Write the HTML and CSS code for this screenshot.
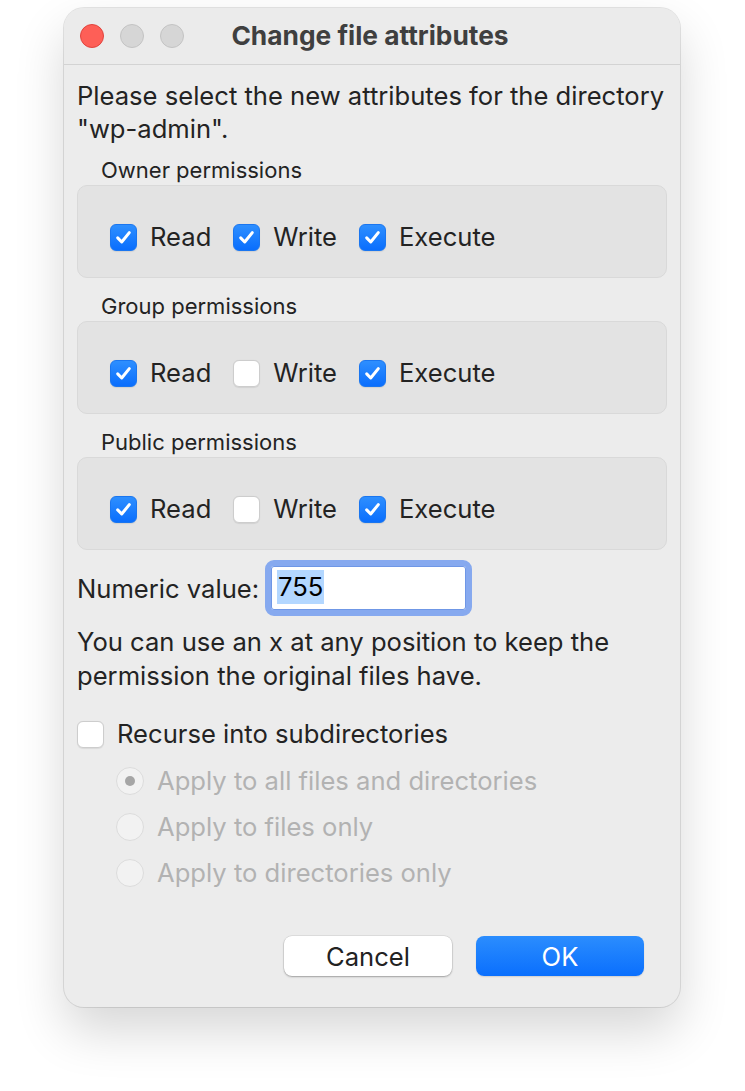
FILE: index.html
```html
<!DOCTYPE html>
<html>
<head>
<meta charset="utf-8">
<link rel="stylesheet" href="styles.css">
</head>
<body>
<div class="window">
  <div class="titlebar">
    <div class="lights">
      <span class="light red"></span>
      <span class="light"></span>
      <span class="light"></span>
    </div>
    <div class="title">Change file attributes</div>
  </div>
  <div class="content">
    <p class="intro">Please select the new attributes for the directory<br>"wp-admin".</p>

    <div class="group-label">Owner permissions</div>
    <div class="group">
      <div class="check"><span class="cb on"><svg viewBox="0 0 28 28"><path d="M7.5 14.5 L12 19 L20.5 8.5"/></svg></span>Read</div>
      <div class="check"><span class="cb on"><svg viewBox="0 0 28 28"><path d="M7.5 14.5 L12 19 L20.5 8.5"/></svg></span>Write</div>
      <div class="check"><span class="cb on"><svg viewBox="0 0 28 28"><path d="M7.5 14.5 L12 19 L20.5 8.5"/></svg></span>Execute</div>
    </div>

    <div class="group-label">Group permissions</div>
    <div class="group">
      <div class="check"><span class="cb on"><svg viewBox="0 0 28 28"><path d="M7.5 14.5 L12 19 L20.5 8.5"/></svg></span>Read</div>
      <div class="check"><span class="cb"></span>Write</div>
      <div class="check"><span class="cb on"><svg viewBox="0 0 28 28"><path d="M7.5 14.5 L12 19 L20.5 8.5"/></svg></span>Execute</div>
    </div>

    <div class="group-label">Public permissions</div>
    <div class="group">
      <div class="check"><span class="cb on"><svg viewBox="0 0 28 28"><path d="M7.5 14.5 L12 19 L20.5 8.5"/></svg></span>Read</div>
      <div class="check"><span class="cb"></span>Write</div>
      <div class="check"><span class="cb on"><svg viewBox="0 0 28 28"><path d="M7.5 14.5 L12 19 L20.5 8.5"/></svg></span>Execute</div>
    </div>

    <div class="numeric">
      <span class="numeric-label">Numeric value:</span>
      <div class="field"><span class="sel">755</span></div>
    </div>

    <p class="hint">You can use an x at any position to keep the<br>permission the original files have.</p>

    <div class="check recurse"><span class="cb"></span>Recurse into subdirectories</div>

    <div class="radios">
      <div class="radio"><span class="rb on"></span>Apply to all files and directories</div>
      <div class="radio"><span class="rb"></span>Apply to files only</div>
      <div class="radio"><span class="rb"></span>Apply to directories only</div>
    </div>

    <div class="buttons">
      <div class="btn cancel">Cancel</div>
      <div class="btn ok">OK</div>
    </div>
  </div>
</div>
</body>
</html>
```

FILE: styles.css
```css
html, body {
  margin: 0;
  padding: 0;
  background: #ffffff;
}
body {
  padding-top: 8px;
  min-height: 1091px;
  box-sizing: border-box;
  font-family: Inter, "Noto Sans", "Liberation Sans", sans-serif;
  color: #232323;
}
.window {
  margin-left: 64px;
  width: 616px;
  height: 999px;
  box-sizing: border-box;
  background: #ececec;
  border-radius: 20px;
  box-shadow: 0 0 0 1px rgba(0,0,0,0.10), 0 24px 50px rgba(0,0,0,0.16);
  overflow: hidden;
}
.titlebar {
  height: 56px;
  border-bottom: 1px solid #d3d3d3;
  display: grid;
  align-items: center;
  background: #ebebeb;
}
.lights, .title {
  grid-area: 1 / 1;
}
.lights {
  display: flex;
  gap: 16px;
  margin-left: 16px;
  justify-self: start;
}
.light {
  width: 22px;
  height: 22px;
  border-radius: 50%;
  background: #d6d6d6;
  border: 1px solid #c3c3c3;
}
.light.red {
  background: #fe5f57;
  border-color: #e0443e;
}
.title {
  justify-self: center;
  margin-right: 4px;
  margin-bottom: 2px;
  font-weight: 700;
  font-size: 26.3px;
  color: #3f3f3f;
}
.content {
  padding: 14px 13px 0 13px;
  font-size: 25.6px;
}
.intro {
  margin: 0;
  line-height: 33px;
}
.group-label {
  font-size: 22px;
  line-height: 26px;
  margin: 15px 0 2px 24px;
}
.intro + .group-label {
  margin-top: 12px;
}
.group {
  box-sizing: border-box;
  height: 93px;
  background: #e3e3e3;
  border: 1px solid #d9d9d9;
  border-radius: 10px;
  padding: 37px 0 0 32px;
  display: flex;
  gap: 22px;
}
.check, .radio {
  display: flex;
  align-items: center;
  height: 28px;
  gap: 13px;
  line-height: 28px;
}
.cb {
  width: 27px;
  height: 27px;
  box-sizing: border-box;
  border-radius: 6px;
  background: #ffffff;
  border: 1px solid #cdcdcd;
  box-shadow: 0 0.5px 1px rgba(0,0,0,0.08);
  display: flex;
  flex: none;
}
.cb.on {
  background: linear-gradient(#2e8fff, #0a6efd);
  border-color: #1a76f0;
}
.cb svg {
  width: 100%;
  height: 100%;
}
.cb path {
  fill: none;
  stroke: #ffffff;
  stroke-width: 3.4;
  stroke-linecap: round;
  stroke-linejoin: round;
}
.numeric {
  display: flex;
  align-items: center;
  margin-top: 10px;
  gap: 6px;
}
.field {
  box-sizing: border-box;
  width: 207px;
  height: 56px;
  border: 6px solid #86a9ef;
  border-radius: 9px;
  background: #ffffff;
  padding: 4px 0 0 6px;
  box-shadow: inset 0 0 0 1px #6f97e6;
}
.sel {
  display: inline-block;
  background: #b3d7ff;
  color: #000;
  line-height: 34px;
  padding: 0 1px;
}
.hint {
  margin: 9px 0 0 0;
  line-height: 34px;
}
.recurse {
  margin-top: 27px;
}
.radios {
  margin: 19px 0 0 39px;
  display: flex;
  flex-direction: column;
  gap: 18px;
  color: #b2b2b2;
}
.rb {
  width: 28px;
  height: 28px;
  box-sizing: border-box;
  border-radius: 50%;
  background: #f2f2f2;
  border: 1px solid #dcdcdc;
  display: flex;
  align-items: center;
  justify-content: center;
  flex: none;
}
.rb.on::after {
  content: "";
  width: 10px;
  height: 10px;
  border-radius: 50%;
  background: #a6a6a6;
}
.buttons {
  display: flex;
  justify-content: flex-end;
  gap: 24px;
  margin-top: 49px;
  padding-right: 23px;
}
.btn {
  width: 168px;
  height: 40px;
  box-sizing: border-box;
  border-radius: 8px;
  display: flex;
  align-items: center;
  justify-content: center;
  font-size: 25.6px;
}
.cancel {
  background: #ffffff;
  color: #222;
  box-shadow: 0 0 0 0.5px rgba(0,0,0,0.12), 0 1px 2px rgba(0,0,0,0.28);
}
.ok {
  background: linear-gradient(#2b8dfe, #0a6ffd);
  color: #ffffff;
  box-shadow: 0 1px 1.5px rgba(0,0,0,0.12);
}
```
